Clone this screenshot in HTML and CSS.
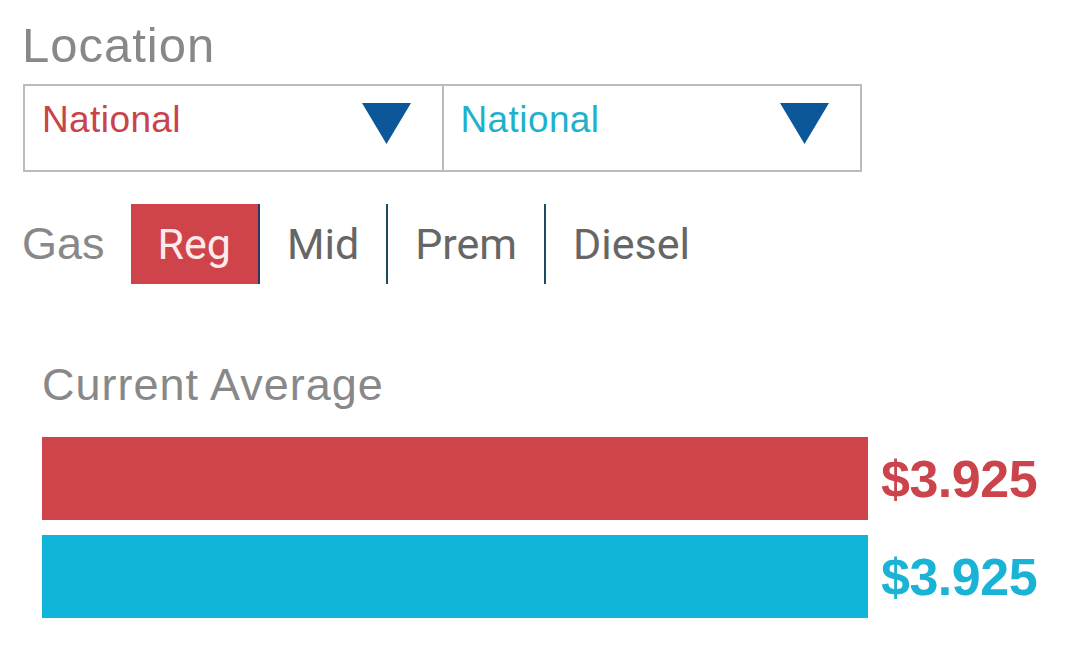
FILE: index.html
```html
<!DOCTYPE html>
<html>
<head>
<meta charset="utf-8">
<link rel="stylesheet" href="styles.css">
</head>
<body>
<div class="page">
  <div class="title">Location</div>
  <div class="selects">
    <div class="select select-red">
      <span class="select-label">National</span>
      <svg class="caret" width="49" height="41" viewBox="0 0 49 41"><polygon points="0,0 49,0 24.5,41" fill="#0b5799"/></svg>
    </div>
    <div class="select select-teal">
      <span class="select-label">National</span>
      <svg class="caret" width="49" height="41" viewBox="0 0 49 41"><polygon points="0,0 49,0 24.5,41" fill="#0b5799"/></svg>
    </div>
  </div>
  <div class="tabs">
    <span class="tabs-label">Gas</span>
    <span class="tab tab-active">Reg</span>
    <span class="tab">Mid</span>
    <span class="tab">Prem</span>
    <span class="tab tab-last">Diesel</span>
  </div>
  <div class="section-title">Current Average</div>
  <div class="bars">
    <div class="bar-row">
      <div class="bar bar-red" style="width:826px"></div>
      <span class="price price-red">$3.925</span>
    </div>
    <div class="bar-row">
      <div class="bar bar-teal" style="width:826px"></div>
      <span class="price price-teal">$3.925</span>
    </div>
  </div>
</div>
</body>
</html>
```
FILE: styles.css
```css
* { box-sizing: border-box; }
html, body { margin: 0; padding: 0; background: #fff; }
body { font-family: "Liberation Sans", Arial, sans-serif; }

.page {
  padding: 21px 0 0 20px;
}

.title {
  font-size: 49px;
  line-height: 49px;
  color: #888;
  margin-left: 2px;
  letter-spacing: 1px;
}

.selects {
  display: flex;
  width: 839px;
  margin: 14px 0 0 3px;
  border: 2px solid #bbb;
  height: 88px;
}

.select {
  flex: 1;
  display: flex;
  justify-content: space-between;
  align-items: flex-start;
  padding: 15px 31px 0 17px;
}

.select-red { border-right: 2px solid #bbb; }

.select-label {
  font-size: 37px;
  line-height: 37px;
  letter-spacing: 0.4px;
}
.select-red .select-label { color: #c9434a; }
.select-teal .select-label { color: #1fb1cc; }

.caret { margin-top: 2px; display: block; }

.tabs {
  display: flex;
  align-items: stretch;
  height: 80px;
  margin-top: 32px;
}

.tabs-label {
  display: flex;
  align-items: center;
  font-size: 45px;
  color: #888;
  margin-right: 26px;
  margin-left: 2px;
}

.tab {
  display: flex;
  align-items: center;
  padding: 0 27px 0 27px;
  font-family: Roboto, "Liberation Sans", sans-serif;
  font-size: 43px;
  color: #666;
  border-right: 2px solid #1f4a60;
}
.tab-active {
  background: #cf434b;
  color: #fdeaea;
  border-right-color: #2c3a60;
}
.tab-last { border-right: none; }

.section-title {
  font-size: 45px;
  line-height: 45px;
  color: #888;
  margin: 78px 0 0 22px;
  letter-spacing: 1px;
}

.bars {
  margin: 30px 0 0 22px;
  display: flex;
  flex-direction: column;
  gap: 15px;
}

.bar-row {
  display: flex;
  align-items: center;
  height: 83px;
}

.bar { height: 83px; }
.bar-red { background: #cf434b; }
.bar-teal { background: #10b5da; }

.price {
  font-size: 52px;
  font-weight: bold;
  letter-spacing: -0.5px;
  margin-left: 13px;
}
.price-red { color: #cc444b; }
.price-teal { color: #1ab3d6; }
```
